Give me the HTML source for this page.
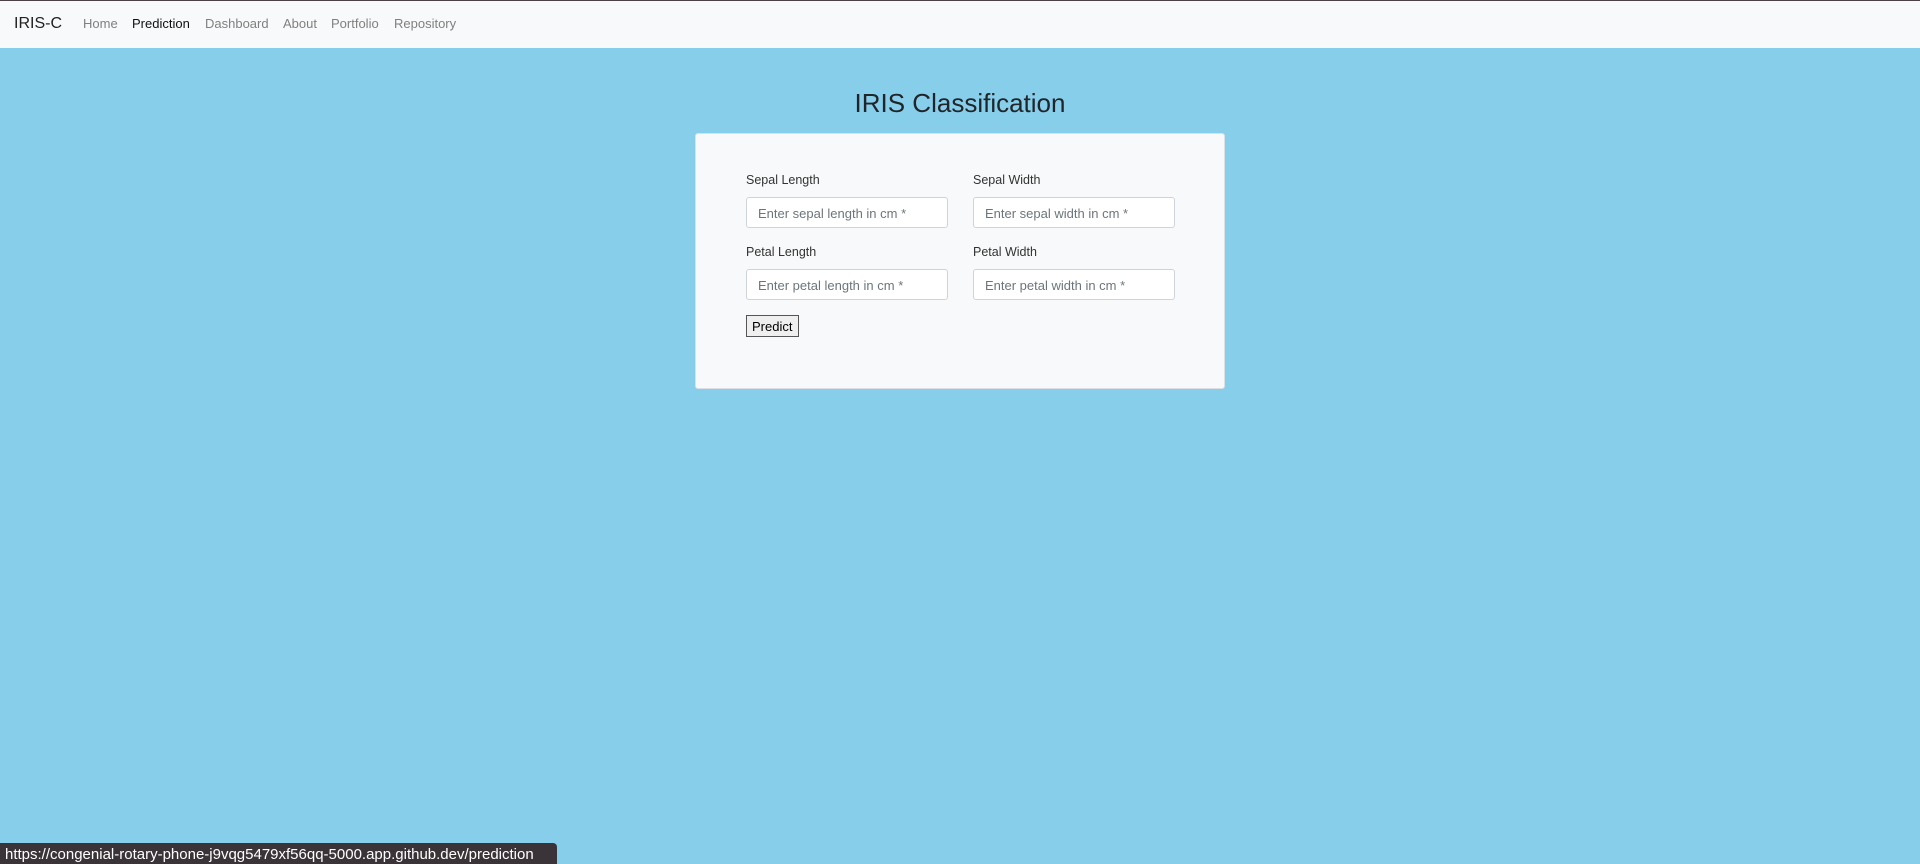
<!DOCTYPE html>
<html><head><meta charset="utf-8"><style>
*{box-sizing:border-box;margin:0;padding:0}
body{width:1920px;height:864px;background:#87ceeb;font-family:"Liberation Sans",Arial,sans-serif;position:relative;overflow:hidden;color:#212529}
.top{position:absolute;left:0;top:0;width:1920px;height:1px;background:#4a4048}
nav{position:absolute;left:0;top:1px;width:1920px;height:47px;background:#f8f9fa}
nav .brand{position:absolute;left:14px;top:14px;font-size:16px;color:#222}
nav a{position:absolute;top:15px;font-size:13px;color:#808080;text-decoration:none}
h1{position:absolute;left:0;width:1920px;top:88px;text-align:center;font-size:26px;font-weight:normal;color:#212529}
.card{position:absolute;left:695px;top:133px;width:530px;height:256px;background:#f8f9fa;border:1px solid #dcdfe3;border-radius:3px}
label{position:absolute;font-size:12.5px;color:#333}
.in{position:absolute;width:202px;height:31px;border:1px solid #ced4da;border-radius:3px;background:#fff;font-size:13px;color:#6c757d;padding:8px 0 0 11px}
.btn{position:absolute;left:746px;top:315px;width:53px;height:22px;border:1px solid #555;background:#efefef;font-size:13px;color:#000;padding:3px 0 0 5px}
.status{position:absolute;left:0;top:843px;width:557px;height:21px;background:#3a3337;color:#fff;font-size:15px;padding:3px 0 0 5px;border-top-right-radius:4px}
</style></head><body>
<div class="top"></div>
<nav><span class="brand">IRIS-C</span>
<a style="left:83px">Home</a><a style="left:132px;color:#111">Prediction</a><a style="left:205px">Dashboard</a><a style="left:283px">About</a><a style="left:331px">Portfolio</a><a style="left:394px">Repository</a></nav>
<h1>IRIS Classification</h1>
<div class="card"></div>
<label style="left:746px;top:173px">Sepal Length</label>
<label style="left:973px;top:173px">Sepal Width</label>
<div class="in" style="left:746px;top:197px">Enter sepal length in cm *</div>
<div class="in" style="left:973px;top:197px">Enter sepal width in cm *</div>
<label style="left:746px;top:245px">Petal Length</label>
<label style="left:973px;top:245px">Petal Width</label>
<div class="in" style="left:746px;top:269px">Enter petal length in cm *</div>
<div class="in" style="left:973px;top:269px">Enter petal width in cm *</div>
<div class="btn">Predict</div>
<div class="status">https://congenial-rotary-phone-j9vqg5479xf56qq-5000.app.github.dev/prediction</div>
</body></html>
